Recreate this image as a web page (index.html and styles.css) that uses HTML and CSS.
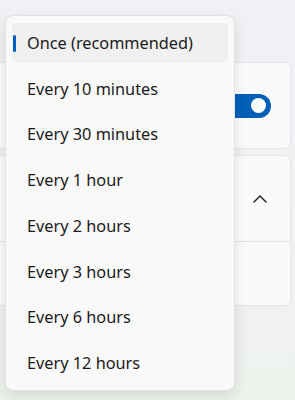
FILE: index.html
```html
<!DOCTYPE html>
<html>
<head>
    <title>Update frequency</title>
    <link rel="stylesheet" href="styles.css">
</head>
<body>
    <div class="page">
        <!-- Auto update card (label is covered by the open list) -->
        <div class="card card-toggle">
            <span class="spacer"></span>
            <span class="toggle"><span class="knob"></span></span>
        </div>

        <!-- Expander card -->
        <div class="card card-expander">
            <div class="expander-head">
                <span class="spacer"></span>
                <span class="status-dot"></span>
                <svg class="chevron" width="16" height="10" viewBox="0 0 16 10">
                    <path d="M1.5 8.5 L8 2 L14.5 8.5" fill="none" stroke="#1b1b1b" stroke-width="1.4"/>
                </svg>
            </div>
            <div class="expander-body"></div>
        </div>
    </div>

    <!-- Open dropdown list -->
    <div class="menu">
        <div class="menu-item selected"><span class="indicator"></span>Once (recommended)</div>
        <div class="menu-item">Every 10 minutes</div>
        <div class="menu-item">Every 30 minutes</div>
        <div class="menu-item">Every 1 hour</div>
        <div class="menu-item">Every 2 hours</div>
        <div class="menu-item">Every 3 hours</div>
        <div class="menu-item">Every 6 hours</div>
        <div class="menu-item">Every 12 hours</div>
    </div>
</body>
</html>
```

FILE: styles.css
```css
body {
    margin: 0;
    padding: 0;
    width: 295px;
    height: 400px;
    overflow: hidden;
    font-family: 'Noto Sans', 'Open Sans', sans-serif;
    background: linear-gradient(180deg, #eff1f5 0%, #eff1f3 50%, #eef2ec 100%);
    color: #1b1b1b;
}

.page {
    padding: 62px 4px 0 0;
    display: flex;
    flex-direction: column;
    gap: 6px;
}

.card {
    margin-left: -12px;
    background: #fafafa;
    border: 1px solid #e3e5e8;
    border-radius: 6px;
}

.spacer {
    flex: 1;
}

.card-toggle {
    height: 85px;
    display: flex;
    align-items: center;
    padding: 0 19px 0 10px;
}

.toggle {
    width: 50px;
    height: 24px;
    border-radius: 12px;
    background: #005fb8;
    display: flex;
    align-items: center;
    justify-content: flex-end;
    padding-right: 5px;
    box-sizing: border-box;
}

.knob {
    width: 15px;
    height: 15px;
    border-radius: 50%;
    background: #ffffff;
}

.card-expander {
    display: flex;
    flex-direction: column;
}

.expander-head {
    height: 85px;
    display: flex;
    align-items: center;
    padding: 0 22px 0 10px;
    border-bottom: 1px solid #e5e5e5;
}

.status-dot {
    width: 10px;
    height: 10px;
    border-radius: 2px;
    background: #005fb8;
    margin-right: 17px;
}

.chevron {
    display: block;
}

.expander-body {
    height: 63px;
}

.menu {
    position: absolute;
    left: 5px;
    top: 15px;
    width: 230px;
    height: 376px;
    box-sizing: border-box;
    padding: 7px 6px;
    background: #f9f9f9;
    border: 1px solid #e2e2e2;
    border-radius: 8px;
    box-shadow: 0 6px 14px rgba(0, 0, 0, 0.10);
    display: flex;
    flex-direction: column;
    gap: 6px;
}

.menu-item {
    position: relative;
    height: 40px;
    display: flex;
    align-items: center;
    padding-left: 15px;
    border-radius: 4px;
    font-size: 16.3px;
    color: #1b1b1b;
    white-space: nowrap;
}

.menu-item.selected {
    background: #f0f0f0;
}

.indicator {
    position: absolute;
    left: 1px;
    top: 12px;
    width: 3px;
    height: 17px;
    border-radius: 2px;
    background: #005fb8;
}
```
